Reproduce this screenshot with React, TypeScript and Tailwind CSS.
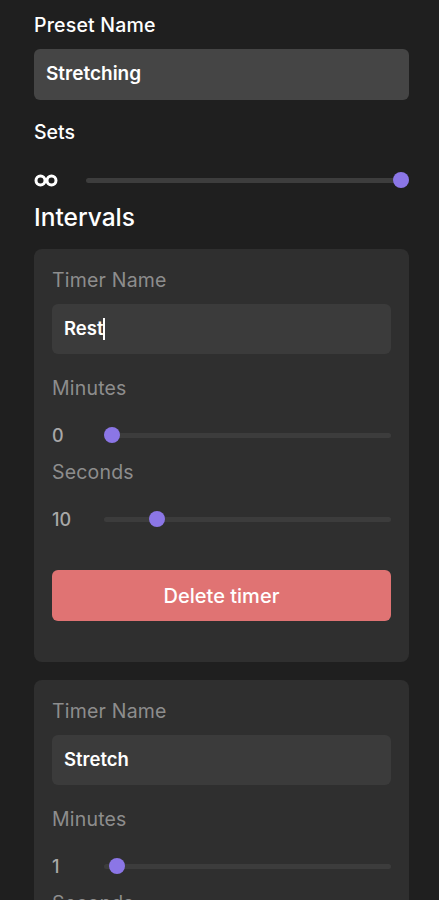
import React from 'react';

const font = { fontFamily: 'Inter, "Noto Sans", sans-serif' };

function Infinity() {
  return (
    <svg width="24" height="13" viewBox="0 0 24 13" fill="none">
      <circle cx="6.5" cy="6.5" r="4.5" stroke="white" strokeWidth="3" />
      <circle cx="17.5" cy="6.5" r="4.5" stroke="white" strokeWidth="3" />
    </svg>
  );
}

interface SliderProps {
  value: React.ReactNode;
  percent: number;
  track: string;
}

const SliderRow: React.FC<SliderProps> = ({ value, percent, track }) => {
  return (
    <div className="flex items-center h-[16px]">
      <div className="w-[52px] flex-shrink-0 text-[18px] text-[#a8a8a8] font-medium">{value}</div>
      <div className={`relative flex-1 h-[5px] rounded-full ${track}`}>
        <div
          className="absolute top-1/2 w-[16px] h-[16px] -translate-y-1/2 rounded-full bg-[#8b76e6]"
          style={{ left: `calc((100% - 16px) * ${percent})` }}
        />
      </div>
    </div>
  );
};

interface TimerCardProps {
  name: string;
  minutes: number;
  seconds: number;
  caret?: boolean;
}

const TimerCard: React.FC<TimerCardProps> = ({ name, minutes, seconds, caret }) => {
  return (
    <div className="bg-[#2f2f2f] rounded-lg px-[18px] pt-[21px] pb-[41px]">
      <div className="text-[19.5px] text-[#8d8d8d] leading-[20px] tracking-[0.01em]">Timer Name</div>
      <div className="mt-[14px] h-[50px] bg-[#3b3b3b] rounded-md flex items-center px-[12px]">
        <span className="text-[18.5px] text-white font-semibold">{name}</span>
        {caret && <span className="w-[1.5px] h-[22px] bg-white" />}
      </div>
      <div className="mt-[24px] text-[19.5px] text-[#8d8d8d] leading-[20px] tracking-[0.01em]">Minutes</div>
      <div className="mt-[29px]">
        <SliderRow value={minutes} percent={minutes / 60} track="bg-[#3c3c3c]" />
      </div>
      <div className="mt-[19px] text-[19.5px] text-[#8d8d8d] leading-[20px] tracking-[0.01em]">Seconds</div>
      <div className="mt-[29px]">
        <SliderRow value={seconds} percent={seconds / 60} track="bg-[#3c3c3c]" />
      </div>
      <button className="mt-[43px] w-full h-[51px] rounded-md bg-[#e07373] text-white text-[20px] font-medium">
        Delete timer
      </button>
    </div>
  );
};

export default function App() {
  return (
    <div className="min-h-screen bg-[#1f1f1f] overflow-hidden" style={font}>
      <div className="ml-[34px] w-[375px] pt-[14px] pb-10">
        <div className="text-[19.5px] text-white font-medium leading-[22px] tracking-[0.01em]">Preset Name</div>
        <div className="mt-[13px] h-[51px] bg-[#454545] rounded-md flex items-center px-[12px]">
          <span className="text-[19px] text-white font-semibold">Stretching</span>
        </div>
        <div className="mt-[21px] text-[19.5px] text-white font-medium leading-[22px]">Sets</div>
        <div className="mt-[29px]">
          <SliderRow value={<Infinity />} percent={1} track="bg-[#3d3d3d]" />
        </div>
        <div className="mt-[15px] text-[24.5px] text-white font-medium leading-[28px]">Intervals</div>
        <div className="mt-[18px] flex flex-col gap-[18px]">
          <TimerCard name="Rest" minutes={0} seconds={10} caret />
          <TimerCard name="Stretch" minutes={1} seconds={0} />
        </div>
      </div>
    </div>
  );
}
